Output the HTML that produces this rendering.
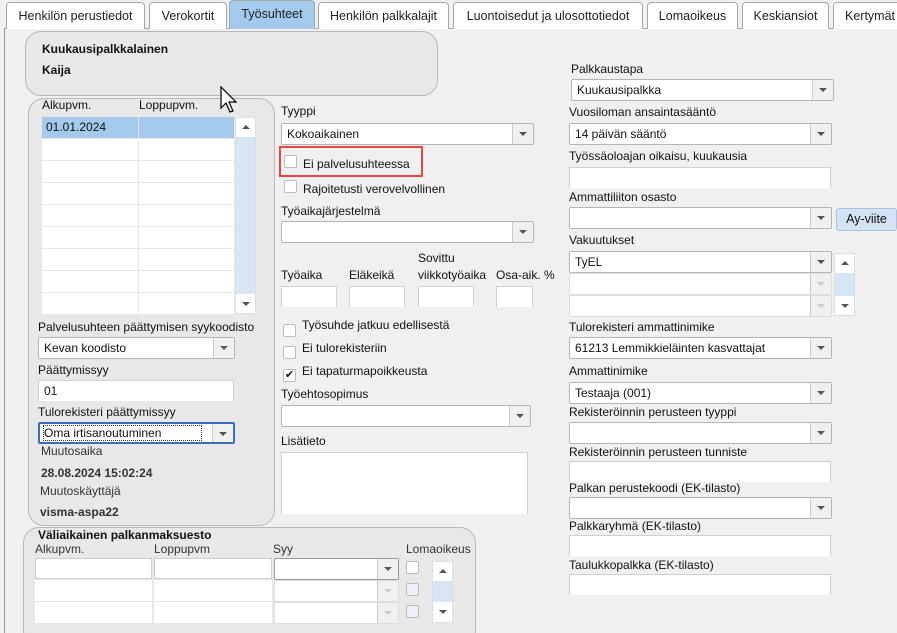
<!DOCTYPE html>
<html><head><meta charset="utf-8"><style>
*{box-sizing:border-box}
html,body{margin:0;width:897px;height:633px;overflow:hidden}
body{background:#f0f0f0;font-family:"Liberation Sans",Arial,sans-serif;font-size:12px;color:#111;position:relative}
.a{position:absolute;white-space:nowrap}
.tab{position:absolute;top:2px;height:27px;border:1px solid #a8a8a8;border-bottom:none;border-radius:4px 4px 0 0;background:#fff;text-align:center;line-height:27px;font-size:12.5px;color:#222}
.sel{position:absolute;height:22px;background:#fff;border:1px solid #b5b5b5;border-radius:2px;padding-left:5px;line-height:20px;font-size:12px}
.sel:after{content:"";position:absolute;right:0;top:0;width:20px;height:100%;background:#f0f0f0;border-left:1px solid #c8c8c8}
.sel:before{content:"";position:absolute;right:6px;top:8px;border-left:4px solid transparent;border-right:4px solid transparent;border-top:4px solid #555;z-index:1}
.sel.dis{border-color:#ddd}.sel.dis:before{border-top-color:#ccc}
.inp{position:absolute;height:21px;background:#fff;border:1px solid #d0d0d0;border-bottom:none;padding-left:5px;line-height:20px;font-size:12px}
.cb{position:absolute;width:13px;height:13px;border:1px solid #bbb;background:#fff;border-radius:2px}
.lbl{position:absolute;white-space:nowrap;font-size:12px}
.b{font-weight:bold}
.sb{position:absolute;width:21px;background:#fff;border:1px solid #ddd}
.cell{position:absolute;background:#fff;height:21px}
</style></head><body>
<div class="a" style="left:4px;top:28px;width:1px;height:605px;background:#999"></div>
<div class="a" style="left:4px;top:28px;width:893px;height:1px;background:#a8a8a8"></div>
<div class="tab" style="left:6px;width:139px">Henkilön perustiedot</div>
<div class="tab" style="left:149px;width:78px">Verokortit</div>
<div class="tab" style="left:229px;width:86px;background:#a3c9ec;top:0;height:29px">Työsuhteet</div>
<div class="tab" style="left:318px;width:131px">Henkilön palkkalajit</div>
<div class="tab" style="left:453px;width:190px">Luontoisedut ja ulosottotiedot</div>
<div class="tab" style="left:647px;width:91px">Lomaoikeus</div>
<div class="tab" style="left:742px;width:87px">Keskiansiot</div>
<div class="tab" style="left:833px;width:70px;text-align:left;padding-left:11px">Kertymät</div>

<div class="a" style="left:25px;top:31px;width:413px;height:65px;border:1px solid #b8b8b8;border-radius:16px;background:#e8e8e8"></div>
<div class="lbl b" style="left:42px;top:42px">Kuukausipalkkalainen</div>
<div class="lbl b" style="left:42px;top:63px">Kaija</div>

<div class="a" style="left:28px;top:98px;width:247px;height:428px;border:1px solid #b8b8b8;border-radius:16px;background:#e8e8e8"></div>
<div class="lbl" style="left:42px;top:98px">Alkupvm.</div>
<div class="lbl" style="left:139px;top:98px">Loppupvm.</div>
<div class="cell" style="left:42px;top:117px;width:96px;background:#a3c9ec;padding-left:4px;line-height:21px;font-size:12px">01.01.2024</div>
<div class="cell" style="left:139px;top:117px;width:95px;background:#a3c9ec"></div>
<div class="a" style="left:42px;top:139px;width:192px;height:175px;background:repeating-linear-gradient(#fff 0 21px,#e8e8e8 21px 22px)"></div>
<div class="a" style="left:138px;top:139px;width:1px;height:175px;background:#e8e8e8"></div>
<div class="sb" style="left:235px;top:117px;height:197px;background:#d6e6f5"></div>
<div class="a" style="left:236px;top:118px;width:19px;height:19px;background:#fff"></div>
<div class="a" style="left:236px;top:294px;width:19px;height:19px;background:#fff"></div>
<div class="a" style="left:242px;top:125px;border-left:4px solid transparent;border-right:4px solid transparent;border-bottom:4px solid #555"></div>
<div class="a" style="left:242px;top:302px;border-left:4px solid transparent;border-right:4px solid transparent;border-top:4px solid #555"></div>

<div class="lbl" style="left:38px;top:320px">Palvelusuhteen päättymisen syykoodisto</div>
<div class="sel" style="left:38px;top:337px;width:197px">Kevan koodisto</div>
<div class="lbl" style="left:38px;top:363px">Päättymissyy</div>
<div class="inp" style="left:38px;top:380px;width:196px">01</div>
<div class="lbl" style="left:38px;top:405px">Tulorekisteri päättymissyy</div>
<div class="sel" style="left:38px;top:422px;width:197px;border:2px solid #3a6fb5;line-height:18px;padding-left:4px"><span style="outline:1px dotted #333">Oma irtisanoutuminen&nbsp;&nbsp;&nbsp;&nbsp;&nbsp;&nbsp;&nbsp;&nbsp;&nbsp;&nbsp;&nbsp;&nbsp;</span></div>
<div class="lbl" style="left:41px;top:444px;color:#333">Muutosaika</div>
<div class="lbl b" style="left:41px;top:466px;color:#333">28.08.2024 15:02:24</div>
<div class="lbl" style="left:40px;top:484px;color:#333">Muutoskäyttäjä</div>
<div class="lbl b" style="left:40px;top:505px;color:#333">visma-aspa22</div>

<div class="a" style="left:23px;top:527px;width:453px;height:120px;border:1px solid #b8b8b8;border-radius:16px;background:#e8e8e8"></div>
<div class="lbl b" style="left:38px;top:528px">Väliaikainen palkanmaksuesto</div>
<div class="lbl" style="left:35px;top:542px;color:#333">Alkupvm.</div>
<div class="lbl" style="left:154px;top:542px;color:#333">Loppupvm</div>
<div class="lbl" style="left:273px;top:542px;color:#333">Syy</div>
<div class="lbl" style="left:406px;top:542px;color:#333">Lomaoikeus</div>
<div class="cell" style="left:35px;top:558px;width:117px;border:1px solid #ccc"></div>
<div class="cell" style="left:154px;top:558px;width:118px;border:1px solid #ccc"></div>
<div class="sel" style="left:274px;top:558px;width:125px;border-color:#999"></div>
<div class="cell" style="left:35px;top:580px;width:117px"></div><div class="cell" style="left:154px;top:580px;width:118px"></div>
<div class="sel dis" style="left:274px;top:580px;width:125px"></div>
<div class="cell" style="left:35px;top:602px;width:117px"></div><div class="cell" style="left:154px;top:602px;width:118px"></div>
<div class="sel dis" style="left:274px;top:602px;width:125px"></div>
<div class="cb" style="left:406px;top:561px"></div>
<div class="cb" style="left:406px;top:583px;background:#eef0f5"></div>
<div class="cb" style="left:406px;top:605px;background:#eef0f5"></div>
<div class="sb" style="left:432px;top:561px;height:62px;background:#d6e6f5"></div>
<div class="a" style="left:433px;top:562px;width:19px;height:19px;background:#fff"></div>
<div class="a" style="left:433px;top:602px;width:19px;height:20px;background:#fff"></div>
<div class="a" style="left:439px;top:569px;border-left:4px solid transparent;border-right:4px solid transparent;border-bottom:4px solid #555"></div>
<div class="a" style="left:439px;top:610px;border-left:4px solid transparent;border-right:4px solid transparent;border-top:4px solid #555"></div>

<div class="lbl" style="left:281px;top:104px">Tyyppi</div>
<div class="sel" style="left:281px;top:123px;width:253px">Kokoaikainen</div>
<div class="a" style="left:279px;top:146px;width:144px;height:31px;border:2px solid #e84545"></div>
<div class="cb" style="left:284px;top:155px"></div>
<div class="lbl" style="left:303px;top:157px">Ei palvelusuhteessa</div>
<div class="cb" style="left:284px;top:180px"></div>
<div class="lbl" style="left:303px;top:182px">Rajoitetusti verovelvollinen</div>
<div class="lbl" style="left:281px;top:204px">Työaikajärjestelmä</div>
<div class="sel" style="left:281px;top:221px;width:253px"></div>
<div class="lbl" style="left:418px;top:251px">Sovittu</div>
<div class="lbl" style="left:281px;top:268px">Työaika</div>
<div class="lbl" style="left:349px;top:268px">Eläkeikä</div>
<div class="lbl" style="left:418px;top:268px">viikkotyöaika</div>
<div class="lbl" style="left:496px;top:268px">Osa-aik. %</div>
<div class="inp" style="left:281px;top:286px;width:56px"></div>
<div class="inp" style="left:349px;top:286px;width:56px"></div>
<div class="inp" style="left:418px;top:286px;width:56px"></div>
<div class="inp" style="left:496px;top:286px;width:37px"></div>
<div class="cb" style="left:283px;top:324px"></div>
<div class="lbl" style="left:302px;top:318px">Työsuhde jatkuu edellisestä</div>
<div class="cb" style="left:283px;top:346px"></div>
<div class="lbl" style="left:302px;top:341px">Ei tulorekisteriin</div>
<div class="cb" style="left:283px;top:369px;font-size:11px;line-height:11px;text-align:center">✔</div>
<div class="lbl" style="left:302px;top:364px">Ei tapaturmapoikkeusta</div>
<div class="lbl" style="left:281px;top:387px">Työehtosopimus</div>
<div class="sel" style="left:281px;top:405px;width:250px"></div>
<div class="lbl" style="left:281px;top:434px">Lisätieto</div>
<div class="inp" style="left:281px;top:452px;width:247px;height:62px"></div>

<div class="lbl" style="left:571px;top:62px">Palkkaustapa</div>
<div class="sel" style="left:571px;top:79px;width:263px">Kuukausipalkka</div>
<div class="lbl" style="left:569px;top:105px">Vuosiloman ansaintasääntö</div>
<div class="sel" style="left:569px;top:123px;width:263px">14 päivän sääntö</div>
<div class="lbl" style="left:569px;top:149px">Työssäoloajan oikaisu, kuukausia</div>
<div class="inp" style="left:569px;top:167px;width:262px"></div>
<div class="lbl" style="left:569px;top:190px">Ammattiliiton osasto</div>
<div class="sel" style="left:569px;top:207px;width:263px"></div>
<div class="a" style="left:836px;top:208px;width:61px;height:23px;background:#d4e3f3;border:1px solid #a9c1dc;border-radius:3px;text-align:center;line-height:21px;font-size:12.5px">Ay-viite</div>
<div class="lbl" style="left:569px;top:233px">Vakuutukset</div>
<div class="sel" style="left:569px;top:251px;width:263px">TyEL</div>
<div class="sel dis" style="left:569px;top:273px;width:263px"></div>
<div class="sel dis" style="left:569px;top:295px;width:263px"></div>
<div class="sb" style="left:834px;top:253px;height:63px;background:#d6e6f5"></div>
<div class="a" style="left:835px;top:254px;width:19px;height:19px;background:#fff"></div>
<div class="a" style="left:835px;top:296px;width:19px;height:19px;background:#fff"></div>
<div class="a" style="left:841px;top:261px;border-left:4px solid transparent;border-right:4px solid transparent;border-bottom:4px solid #555"></div>
<div class="a" style="left:841px;top:304px;border-left:4px solid transparent;border-right:4px solid transparent;border-top:4px solid #555"></div>
<div class="lbl" style="left:569px;top:320px">Tulorekisteri ammattinimike</div>
<div class="sel" style="left:569px;top:337px;width:263px">61213 Lemmikkieläinten kasvattajat</div>
<div class="lbl" style="left:569px;top:364px">Ammattinimike</div>
<div class="sel" style="left:569px;top:382px;width:263px">Testaaja (001)</div>
<div class="lbl" style="left:569px;top:405px">Rekisteröinnin perusteen tyyppi</div>
<div class="sel" style="left:569px;top:422px;width:263px"></div>
<div class="lbl" style="left:569px;top:445px">Rekisteröinnin perusteen tunniste</div>
<div class="inp" style="left:569px;top:461px;width:262px"></div>
<div class="lbl" style="left:569px;top:481px">Palkan perustekoodi (EK-tilasto)</div>
<div class="sel" style="left:569px;top:497px;width:263px"></div>
<div class="lbl" style="left:569px;top:519px">Palkkaryhmä (EK-tilasto)</div>
<div class="inp" style="left:569px;top:535px;width:262px"></div>
<div class="lbl" style="left:569px;top:558px">Taulukkopalkka (EK-tilasto)</div>
<div class="inp" style="left:569px;top:574px;width:262px"></div>

<svg class="a" style="left:220px;top:86px" width="20" height="30" viewBox="0 0 20 30"><path d="M1 1 L1 22 L6 17 L10 26 L13 25 L9 16 L16 16 Z" fill="#fff" stroke="#000" stroke-width="1.2"/></svg>
</body></html>
